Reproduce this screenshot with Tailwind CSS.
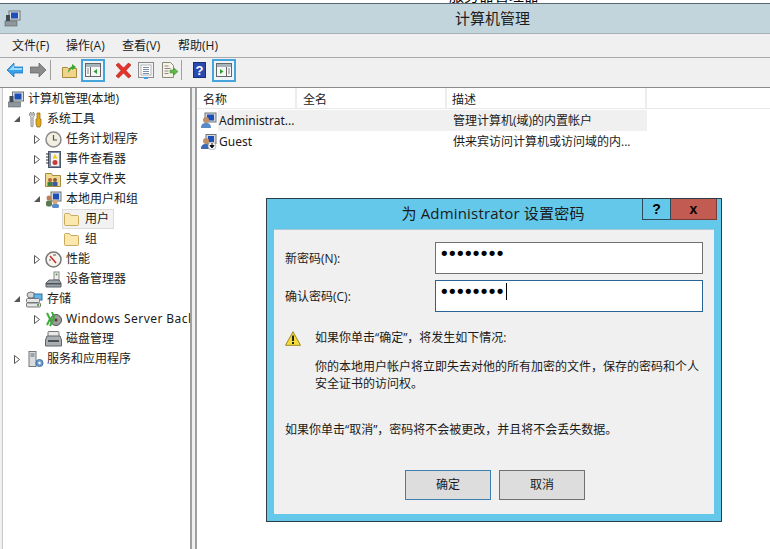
<!DOCTYPE html>
<html lang="zh">
<head>
<meta charset="utf-8">
<script src="https://cdn.jsdelivr.net/npm/@tailwindcss/browser@4"></script>
</head>
<body class="bg-white">
<div class="relative w-[770px] h-[549px] overflow-hidden flex flex-col bg-[#f0f0f0] text-[12px] leading-[20px] text-[#1a1a1a] font-['Open_Sans','Noto_Sans_CJK_SC',sans-serif] [&_svg]:shrink-0">
  <!-- sliver of the window behind -->
  <div class="h-[3px] bg-white overflow-hidden shrink-0 pl-[449px]">
    <div class="-mt-[15px] text-[15px] leading-[20px] text-black whitespace-nowrap">服务器管理器</div>
  </div>
  <!-- title bar -->
  <div class="h-[31px] shrink-0 bg-[#c2d5dc] border-t border-t-[#55666e] border-b border-b-[#a6b2b8] relative flex items-center justify-center pl-[215px] pb-[2px]">
    <svg class="absolute left-[4px] top-[6px]" width="17" height="17" viewBox="0 0 17 17"><rect x="5" y="1" width="11" height="9" fill="#d9dde0" stroke="#6d7478"/><rect x="7" y="2.5" width="7" height="6" fill="#1d4fb8"/><rect x="1" y="11" width="12" height="5" fill="#8f979b" stroke="#5b6266" stroke-width=".6"/><rect x="2" y="5" width="4" height="6" fill="#3f4a52"/></svg>
    <span class="text-[15px] text-[#1c1c1c]">计算机管理</span>
  </div>
  <!-- menu -->
  <div class="h-[24px] shrink-0 flex items-center pl-[12px] border-b border-[#a9a9a9]">
    <span class="w-[54px]">文件(F)</span><span class="w-[56px]">操作(A)</span><span class="w-[56px]">查看(V)</span><span>帮助(H)</span>
  </div>
  <!-- toolbar -->
  <div class="h-[30px] shrink-0 flex items-center pl-[7px] pb-[5px] border-b border-[#8c8c8c]">
    <svg width="16" height="14" viewBox="0 0 16 14"><path d="M0 7 7 0v4h9v6H7v4z" fill="#3aa0e8" stroke="#1a6fb8" stroke-width=".7"/><path d="M2 7 7 2v3h8v2z" fill="#9adcff"/></svg>
    <svg class="ml-[7px]" width="16" height="14" viewBox="0 0 16 14"><path d="M16 7 9 0v4H0v6h9v4z" fill="#8b8b8b" stroke="#5f5f5f" stroke-width=".7"/></svg>
    <div class="ml-[4px] w-px h-[20px] bg-[#a0a0a0]"></div>
    <svg class="ml-[11px]" width="15" height="15" viewBox="0 0 15 15"><path d="M0.5 4.5h5l1 1h8v9h-14z" fill="#f0d48a" stroke="#a88a3c"/><path d="M6 10C6 6 8 4 10 3.500V1l4 3-4 3V5.500C8.500 6 7.500 8 6 10z" fill="#3fa535"/></svg>
    <div class="ml-[4px] w-[24px] h-[23px] border-2 border-[#45a5dc] bg-[#eef5f8] flex items-center justify-center">
      <svg width="16" height="14" viewBox="0 0 16 14"><rect x=".5" y=".5" width="15" height="13" fill="#f6f6f6" stroke="#666"/><rect x="1" y="1" width="14" height="3" fill="#a8b4bc"/><path d="M5.500 4v9" stroke="#666"/><path d="M12 6v5L8.500 8.500z" fill="#2aa02a"/><path d="M2 6h2M2 8h2M2 10h2" stroke="#888"/></svg>
    </div>
    <svg class="ml-[10px]" width="17" height="17" viewBox="0 0 17 17"><path d="M1 3 3.500 1 8.500 6 13.500 1 16 3 11 8.500 16 14 13.500 16 8.500 11 3.500 16 1 14 6 8.500z" fill="#e5332a" stroke="#a81c16" stroke-width=".6"/></svg>
    <svg class="ml-[6px]" width="16" height="17" viewBox="0 0 16 17"><rect x=".5" y=".5" width="15" height="15" fill="#f3f3f3" stroke="#8a8a8a"/><rect x="3" y="3" width="10" height="10" fill="#fff" stroke="#b5b5b5"/><path d="M5 5.500h6M5 7.500h6M5 9.500h6M5 11.500h6" stroke="#7a8fa8"/><rect x="6" y="15" width="4" height="2" fill="#3aa0e8"/></svg>
    <svg class="ml-[7px]" width="17" height="16" viewBox="0 0 17 16"><path d="M1.500.5h8l3 3v12h-11z" fill="#f6f3e6" stroke="#8a8a7a"/><path d="M3.500 4h4M3.500 6.500h6M3.500 9h4M3.500 11.500h4" stroke="#8a8a8a"/><path d="M9 8h4V6l4 3.500-4 3.500v-2H9z" fill="#62b84a" stroke="#3d8a2c" stroke-width=".5"/></svg>
    <div class="ml-[3px] w-px h-[20px] bg-[#a0a0a0]"></div>
    <div class="ml-[11px] w-[13px] h-[16px] bg-[#2a49b0] border border-[#17307e] flex items-center justify-center text-white font-bold text-[13px] leading-none font-['Liberation_Sans',sans-serif]">?</div>
    <div class="ml-[6px] w-[24px] h-[23px] border-2 border-[#45a5dc] bg-[#eef5f8] flex items-center justify-center">
      <svg width="16" height="14" viewBox="0 0 16 14"><rect x=".5" y=".5" width="15" height="13" fill="#f6f6f6" stroke="#666"/><rect x="1" y="1" width="14" height="3" fill="#a8b4bc"/><path d="M10.500 4v9" stroke="#666"/><path d="M4 6v5l3.500-2.500z" fill="#2aa02a"/><path d="M12 6h2M12 8h2M12 10h2" stroke="#888"/></svg>
    </div>
  </div>
  <!-- panes -->
  <div class="flex-1 min-h-0 flex pl-[2px] gap-[3px]">
    <!-- tree -->
    <div class="w-[190px] bg-white border-r-2 border-l border-[#a0a0a0] border-l-[#c8c8c8] overflow-hidden flex flex-col pt-[1px] whitespace-nowrap">
      <div class="h-[20px] flex items-center pl-[4px]">
        <svg width="18" height="17" viewBox="0 0 17 17"><rect x="5" y="1" width="11" height="9" fill="#d9dde0" stroke="#6d7478"/><rect x="7" y="2.500" width="7" height="6" fill="#1d4fb8"/><rect x="1" y="11" width="12" height="5" fill="#8f979b" stroke="#5b6266" stroke-width=".6"/><rect x="2" y="5" width="4" height="6" fill="#3f4a52"/></svg>
        <span class="ml-[3px]">计算机管理(本地)</span>
      </div>
      <div class="h-[20px] flex items-center pl-[10px]">
        <svg width="8" height="8" viewBox="0 0 8 8"><path d="M1 7 7 1v6z" fill="#555"/></svg>
        <svg class="ml-[6px]" width="17" height="17" viewBox="0 0 17 17"><path d="M4 1c-2 1-2 4 0 5v9c0 1 2 1 2 0V6c2-1 2-4 0-5v3H4z" fill="#e8e8e8" stroke="#707070" stroke-width=".8"/><path d="M10 2h3v6h1v5l-1 3h-3l-1-3V8h1z" fill="#e2a91a" stroke="#8a6410" stroke-width=".7"/></svg>
        <span class="ml-[3px]">系统工具</span>
      </div>
      <div class="h-[20px] flex items-center pl-[31px]">
        <svg width="6" height="9" viewBox="0 0 6 9"><path d="M.5.500 5.500 4.500.5 8.500z" fill="#fff" stroke="#555"/></svg>
        <svg class="ml-[5px]" width="17" height="17" viewBox="0 0 17 17"><circle cx="8.500" cy="8.500" r="7.500" fill="#f2eee0" stroke="#8b8b8b" stroke-width="1.500"/><path d="M8.500 4v5H12" fill="none" stroke="#555" stroke-width="1.200"/></svg>
        <span class="ml-[4px]">任务计划程序</span>
      </div>
      <div class="h-[20px] flex items-center pl-[31px]">
        <svg width="6" height="9" viewBox="0 0 6 9"><path d="M.5.500 5.500 4.500.5 8.500z" fill="#fff" stroke="#555"/></svg>
        <svg class="ml-[6px]" width="15" height="17" viewBox="0 0 15 17"><rect x="2.500" y=".5" width="12" height="16" fill="#7f8ba6" stroke="#4e566a"/><rect x="5" y="2" width="8" height="13" fill="#f2f2ee"/><path d="M9 3l2.500 4.500h-5z" fill="#f2c81c"/><circle cx="9" cy="11.500" r="2.500" fill="#c93a3a"/><path d="M0 3h3M0 6h3M0 9h3M0 12h3" stroke="#333"/></svg>
        <span class="ml-[5px]">事件查看器</span>
      </div>
      <div class="h-[20px] flex items-center pl-[31px]">
        <svg width="6" height="9" viewBox="0 0 6 9"><path d="M.5.500 5.500 4.500.5 8.500z" fill="#fff" stroke="#555"/></svg>
        <svg class="ml-[5px]" width="16" height="16" viewBox="0 0 16 16"><path d="M.5 2.500h6l1 2h8v11H.5z" fill="#f2d990" stroke="#a68a40"/><circle cx="5" cy="9" r="2" fill="#b5633a"/><rect x="2.500" y="11" width="5" height="4" fill="#3f7f3f"/><circle cx="10" cy="9" r="2" fill="#8a5a3a"/><rect x="7.500" y="11" width="5" height="4" fill="#3a5aa8"/></svg>
        <span class="ml-[5px]">共享文件夹</span>
      </div>
      <div class="h-[20px] flex items-center pl-[30px]">
        <svg width="8" height="8" viewBox="0 0 8 8"><path d="M1 7 7 1v6z" fill="#555"/></svg>
        <svg class="ml-[4px]" width="17" height="17" viewBox="0 0 17 17"><rect x="6" y="1" width="10" height="9" fill="#d7dadc" stroke="#6d7478"/><rect x="8" y="2.500" width="6" height="6" fill="#1d4fb8"/><circle cx="4" cy="7" r="2.500" fill="#b98058"/><rect x="1" y="9.500" width="6" height="6" rx="2" fill="#5a7a50"/><circle cx="10" cy="11" r="2.500" fill="#d5a47c"/><rect x="7" y="13" width="7" height="4" rx="1.500" fill="#5a8bc8"/></svg>
        <span class="ml-[4px]">本地用户和组</span>
      </div>
      <div class="h-[20px] flex items-center ml-[59px] w-[52px] border border-[#dcdcdc] bg-[#f2f2f2] pl-[1px]">
        <svg width="15" height="13" viewBox="0 0 15 13"><path d="M.5 1.500a1 1 0 0 1 1-1h4l1.500 2h6.500a1 1 0 0 1 1 1v8a1 1 0 0 1-1 1h-12a1 1 0 0 1-1-1z" fill="#fbe8ae" stroke="#c9aa5e"/></svg>
        <span class="ml-[6px]">用户</span>
      </div>
      <div class="h-[20px] flex items-center pl-[61px]">
        <svg width="15" height="13" viewBox="0 0 15 13"><path d="M.5 1.500a1 1 0 0 1 1-1h4l1.500 2h6.500a1 1 0 0 1 1 1v8a1 1 0 0 1-1 1h-12a1 1 0 0 1-1-1z" fill="#fbe8ae" stroke="#c9aa5e"/></svg>
        <span class="ml-[6px]">组</span>
      </div>
      <div class="h-[20px] flex items-center pl-[31px]">
        <svg width="6" height="9" viewBox="0 0 6 9"><path d="M.5.500 5.500 4.500.5 8.500z" fill="#fff" stroke="#555"/></svg>
        <svg class="ml-[5px]" width="17" height="17" viewBox="0 0 17 17"><circle cx="8.500" cy="8.500" r="7.500" fill="#f6f4ec" stroke="#777" stroke-width="1.500"/><path d="M5 5l6 7" stroke="#c42a2a" stroke-width="1.500"/><path d="M8 4h3M4 9h2" stroke="#555"/></svg>
        <span class="ml-[4px]">性能</span>
      </div>
      <div class="h-[20px] flex items-center pl-[42px]">
        <svg width="17" height="17" viewBox="0 0 17 17"><rect x="9" y="1" width="5" height="8" fill="#eee" stroke="#888"/><circle cx="11.500" cy="3.500" r="1" fill="#4a9a3a"/><path d="M4 9h10l2 3v4H1v-4z" fill="#9aa2a8" stroke="#5b6268"/><rect x="1" y="12" width="15" height="1.500" fill="#4e555a"/></svg>
        <span class="ml-[4px]">设备管理器</span>
      </div>
      <div class="h-[20px] flex items-center pl-[10px]">
        <svg width="8" height="8" viewBox="0 0 8 8"><path d="M1 7 7 1v6z" fill="#555"/></svg>
        <svg class="ml-[5px]" width="17" height="17" viewBox="0 0 17 17"><ellipse cx="5" cy="4" rx="4" ry="3" fill="#cfd3d6" stroke="#777"/><rect x="8" y="3" width="8" height="6" fill="#5fb4e8" stroke="#34739e"/><rect x=".5" y="7.500" width="13" height="4" rx="1" fill="#e4e6e8" stroke="#777"/><rect x=".5" y="12" width="14" height="4" rx="1" fill="#e4e6e8" stroke="#777"/><rect x="11" y="13" width="2" height="2" fill="#5aaa3a"/></svg>
        <span class="ml-[4px]">存储</span>
      </div>
      <div class="h-[20px] flex items-center pl-[31px]">
        <svg width="6" height="9" viewBox="0 0 6 9"><path d="M.5.500 5.500 4.500.5 8.500z" fill="#fff" stroke="#555"/></svg>
        <svg class="ml-[5px]" width="17" height="17" viewBox="0 0 17 17"><circle cx="11" cy="9" r="5.500" fill="#9c9c9c" stroke="#555"/><circle cx="11" cy="9" r="1.500" fill="#5a3a2a"/><path d="M2 2 5 8 2 14M7 1 9 6 7 11 5 15" fill="none" stroke="#35b035" stroke-width="2"/></svg>
        <span class="ml-[4px] tracking-[0.45px] font-['Noto_Sans','Noto_Sans_CJK_SC',sans-serif]">Windows Server Backup</span>
      </div>
      <div class="h-[20px] flex items-center pl-[42px]">
        <svg width="17" height="16" viewBox="0 0 17 16"><rect x="3" y=".5" width="11" height="5" rx="1" fill="#e8e8e8" stroke="#777"/><path d="M2 5h13l1.500 4v6H.5V9z" fill="#a8aeb2" stroke="#5f666a"/><rect x="3" y="9" width="11" height="2" fill="#4a5054"/></svg>
        <span class="ml-[4px]">磁盘管理</span>
      </div>
      <div class="h-[20px] flex items-center pl-[11px]">
        <svg width="6" height="9" viewBox="0 0 6 9"><path d="M.5.500 5.500 4.500.5 8.500z" fill="#fff" stroke="#555"/></svg>
        <svg class="ml-[8px]" width="16" height="17" viewBox="0 0 16 17"><rect x="1" y=".5" width="7" height="15" fill="#d9dcde" stroke="#777"/><path d="M2.500 3h4M2.500 5h4" stroke="#5a6a7a"/><circle cx="11.500" cy="12" r="3.500" fill="#6f9fd0" stroke="#3f6fa0"/><circle cx="11.500" cy="12" r="1.200" fill="#fff"/></svg>
        <span class="ml-[3px]">服务和应用程序</span>
      </div>
    </div>
    <!-- list -->
    <div class="flex-1 bg-white border-l-2 border-[#a0a0a0] whitespace-nowrap">
      <div class="h-[21px] flex border-b border-[#e8e8e8] bg-white leading-[23px]">
        <div class="w-[100px] h-[20px] pl-[6px] bg-white border-r-2 border-[#ededed]">名称</div>
        <div class="w-[150px] h-[20px] pl-[6px] border-r-2 border-[#ededed]">全名</div>
        <div class="w-[200px] h-[20px] pl-[5px] border-r-2 border-[#ededed]">描述</div>
      </div>
      <div class="mt-[1px] h-[21px] flex items-center pl-[4px] w-[450px]">
        <svg width="16" height="17" viewBox="0 0 16 17"><rect x="4" y="1" width="11" height="9" fill="#d7dadc" stroke="#6d7478"/><rect x="6" y="2.500" width="7" height="6" fill="#1d4fb8"/><circle cx="5" cy="8" r="3" fill="#c09068"/><path d="M0 16c0-4 2-5 5-5s5 1 5 5z" fill="#5a8bc8"/></svg>
        <div class="ml-[1px] h-[21px] flex-1 bg-[#f0f0f0] flex items-center pl-[1px]">
          <span class="w-[234px] font-['Noto_Sans','Noto_Sans_CJK_SC',sans-serif]">Administrat...</span><span>管理计算机(域)的内置帐户</span>
        </div>
      </div>
      <div class="h-[21px] flex items-center pl-[4px]">
        <svg width="16" height="16" viewBox="0 0 16 16"><rect x="5" y=".5" width="10" height="9" fill="#d7dadc" stroke="#6d7478"/><rect x="7" y="2" width="6" height="6" fill="#1d4fb8"/><circle cx="5" cy="7" r="3" fill="#c09068"/><path d="M0 15c0-4 2-5 5-5s4 1 5 3v2z" fill="#3a6ab0"/><circle cx="11" cy="12" r="4" fill="#f4f4f4" stroke="#888" stroke-width=".5"/><path d="M11 9v4M9 11.500l2 2.500 2-2.500z" fill="#111" stroke="#111"/></svg>
        <span class="ml-[2px] w-[234px] font-['Noto_Sans','Noto_Sans_CJK_SC',sans-serif]">Guest</span><span>供来宾访问计算机或访问域的内...</span>
      </div>
    </div>
  </div>

  <!-- dialog -->
  <div class="absolute left-[266px] top-[198px] w-[456px] h-[324px] bg-[#63c8ea] border border-[#2e3d45] flex flex-col">
    <div class="h-[30px] shrink-0 relative flex items-center justify-center pb-[3px] pr-[2px]">
      <span class="text-[15px] tracking-[0.18px]">为 Administrator 设置密码</span>
      <div class="absolute top-0 left-[375px] flex">
        <div class="w-[29px] h-[21px] border border-t-0 border-[#2e4a58] flex items-center justify-center font-bold text-[14px] font-['Liberation_Sans',sans-serif] text-black">?</div>
        <div class="w-[46px] h-[21px] bg-[#c25b52] border-b border-r border-[#7b3a35] flex items-center justify-center font-bold text-[14px] font-['Liberation_Sans',sans-serif] text-black">x</div>
      </div>
    </div>
    <div class="mx-[7px] h-[285px] bg-[#f0f0f0] border-t border-[#a8c8d6] relative flex flex-col pl-[11px] pr-[11px]">
      <div class="mt-[12px] h-[32px] flex items-center">
        <span class="w-[150px] mt-[2px]">新密码(N):</span>
        <div class="w-[268px] h-[32px] bg-white border border-[#707070] pl-[3px] pt-[1px] text-black text-[18px] leading-[20px] tracking-[-2.65px] font-['DejaVu_Sans',sans-serif]">••••••••</div>
      </div>
      <div class="mt-[6px] h-[32px] flex items-center">
        <span class="w-[150px] mt-[2px]">确认密码(C):</span>
        <div class="w-[268px] h-[32px] bg-white border border-[#2a6496] pl-[3px] pt-[1px] flex items-start text-black text-[18px] leading-[20px] tracking-[-2.65px] font-['DejaVu_Sans',sans-serif]">••••••••<span class="ml-[3px] mt-[1px] w-px h-[17px] bg-black"></span></div>
      </div>
      <div class="mt-[16px] flex items-center h-[20px]">
        <svg width="16" height="15" viewBox="0 0 16 15"><path d="M8 .7 15.500 14.300H.5z" fill="#f5dc3a" stroke="#9a8a20" stroke-linejoin="round"/><rect x="7" y="4.500" width="2" height="5.500" fill="#222"/><rect x="7" y="11" width="2" height="2" fill="#222"/></svg>
        <span class="ml-[14px]">如果你单击“确定”，将发生如下情况:</span>
      </div>
      <p class="mt-[10px] ml-[30px] w-[392px] leading-[17px]">你的本地用户帐户将立即失去对他的所有加密的文件，保存的密码和个人安全证书的访问权。</p>
      <p class="mt-[28px]">如果你单击“取消”，密码将不会被更改，并且将不会丢失数据。</p>
      <div class="mt-[30px] flex gap-[8px] ml-[120px]">
        <div class="w-[86px] h-[30px] bg-[#dddddd] border border-[#3c7fb1] flex items-center justify-center">确定</div>
        <div class="w-[86px] h-[30px] bg-[#dddddd] border border-[#707070] flex items-center justify-center">取消</div>
      </div>
    </div>
  </div>
</div>
</body>
</html>
